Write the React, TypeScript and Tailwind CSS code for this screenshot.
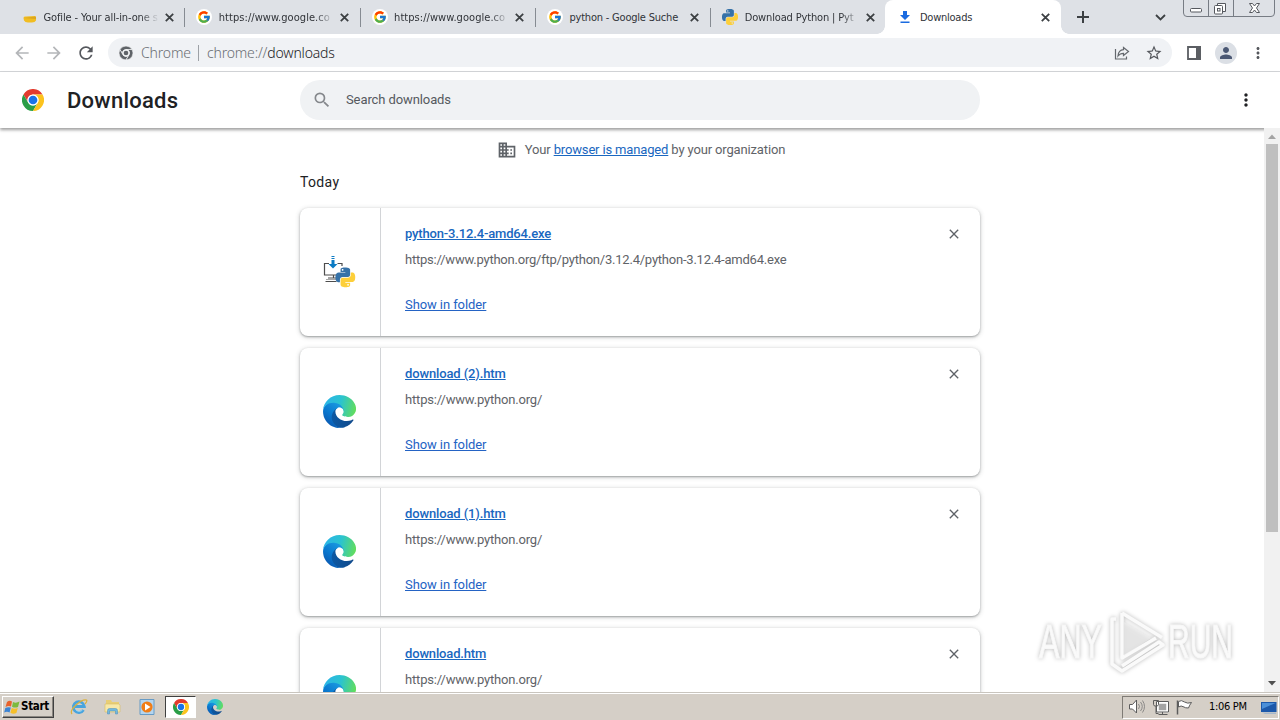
import React from "react";
import { FcGoogle } from "react-icons/fc";
import { MdDomain, MdSearch, MdClose, MdMoreVert, MdPerson, MdStarBorder, MdRefresh, MdArrowBack, MdArrowForward } from "react-icons/md";

const PY =
  "M14.25.18l.9.2.73.26.59.3.45.32.34.34.25.34.16.33.1.3.04.26.02.2-.01.13V8.5l-.05.63-.13.55-.21.46-.26.38-.3.31-.33.25-.35.19-.35.14-.33.1-.3.07-.26.04-.21.02H8.77l-.69.05-.59.14-.5.22-.41.27-.33.32-.27.35-.2.36-.15.37-.1.35-.07.32-.04.27-.02.21v3.06H3.17l-.21-.03-.28-.07-.32-.12-.35-.18-.36-.26-.36-.36-.35-.46-.32-.59-.28-.73-.21-.88-.14-1.05-.05-1.23.06-1.22.16-1.04.24-.87.32-.71.36-.57.4-.44.42-.33.42-.24.4-.16.36-.1.32-.05.24-.01h.16l.06.01h8.16v-.83H6.18l-.01-2.75-.02-.37.05-.34.11-.31.17-.28.25-.26.31-.23.38-.2.44-.18.51-.15.58-.12.64-.1.71-.06.77-.04.84-.02 1.27.05zm-6.3 1.98l-.23.33-.08.41.08.41.23.34.33.22.41.09.41-.09.33-.22.23-.34.08-.41-.08-.41-.23-.33-.33-.22-.41-.09-.41.09z";

function PythonShapes() {
  return (
    <g>
      <path d={PY} fill="#3672a8" fillRule="evenodd" />
      <path d={PY} fill="#fdcf3a" fillRule="evenodd" transform="rotate(180 12 12)" />
    </g>
  );
}

function ChromeLogo({ size, mono = false }: { size: number; mono?: boolean }) {
  const c = mono ? ["#5f6368", "#5f6368", "#5f6368", "#5f6368"] : ["#e33b2e", "#2a9e47", "#fcc31e", "#1a73e8"];
  const stroke = mono ? "#f1f3f4" : "none";
  return (
    <svg width={size} height={size} viewBox="0 0 48 48">
      <g stroke={stroke} strokeWidth={mono ? 2.5 : 0}>
        <path d="M24 12H44.8A24 24 0 0 0 3.2 12L13.6 30A12 12 0 0 1 24 12z" fill={c[0]} />
        <path d="M3.2 12A24 24 0 0 0 24 48L34.4 30A12 12 0 0 1 13.6 30z" fill={c[1]} />
        <path d="M44.8 12A24 24 0 0 1 24 48L34.4 30A12 12 0 0 0 24 12z" fill={c[2]} />
      </g>
      <circle cx="24" cy="24" r="12" fill={mono ? "#f1f3f4" : "#fff"} />
      <circle cx="24" cy="24" r={mono ? 8 : 9.5} fill={c[3]} />
    </svg>
  );
}

function EdgeLogo({ size }: { size: number }) {
  return (
    <svg width={size} height={size} viewBox="0 0 256 256" className="shrink-0">
      <defs>
        <linearGradient id="edgeDark" x1="60" y1="177" x2="240" y2="177" gradientUnits="userSpaceOnUse">
          <stop stopColor="#0c59a4" />
          <stop offset="1" stopColor="#114a8b" />
        </linearGradient>
        <linearGradient id="edgeBlue" x1="150" y1="70" x2="40" y2="225" gradientUnits="userSpaceOnUse">
          <stop stopColor="#1b9de2" />
          <stop offset=".6" stopColor="#0a78cf" />
          <stop offset="1" stopColor="#0a5cb4" />
        </linearGradient>
        <linearGradient id="edgeGreen" x1="10" y1="60" x2="250" y2="120" gradientUnits="userSpaceOnUse">
          <stop stopColor="#2bb5e8" />
          <stop offset=".5" stopColor="#2bc3cf" />
          <stop offset="1" stopColor="#62dd5d" />
        </linearGradient>
      </defs>
      <path fill="url(#edgeDark)" d="M231 190.5c-3.4 1.8-6.9 3.4-10.5 4.7a101.8 101.8 0 0 1-35.9 6.4c-47.3 0-88.5-32.5-88.5-74.3.1-11.4 6.4-21.9 16.4-27.3-42.8 1.8-53.8 46.4-53.8 72.5 0 74 68.1 81.4 82.8 81.4 7.9 0 19.8-2.3 27-4.6l1.3-.4c27.6-9.5 51-28.1 66.6-52.8a4 4 0 0 0-5.4-5.6z" />
      <path fill="url(#edgeBlue)" d="M105.7 241.4c-8.9-5.5-16.6-12.8-22.7-21.3a80.7 80.7 0 0 1 29.5-120.1c3.1-1.5 8.5-4.1 15.6-4 10.2.1 19.7 4.9 25.8 13 4.1 5.4 6.3 11.9 6.4 18.7 0-.2 24.5-79.6-80-79.6C36.4 48 .3 89.8.3 126.5c-.2 19.4 4 38.6 12.1 56.2 27.6 58.8 94.8 87.6 156.4 67.1-21.1 6.6-44.1 3.6-62.9-8.3z" />
      <path fill="url(#edgeGreen)" d="M152.3 148.9c-.9 1-3.4 2.5-3.4 5.6 0 2.6 1.7 5.2 4.8 7.3 14.4 10.1 41.7 8.7 41.8 8.7 10.7 0 21.3-2.9 30.5-8.4 18.9-11 30.5-31.2 30.5-53.1.3-22.5-8-37.4-11.3-44C223.8 23.5 177.7 0 127.6 0 57.1 0 .6 56.2-.4 126.2c.5-36.5 36.8-66 80-66 3.5 0 23.5.3 42 10.1 16.3 8.6 24.9 18.9 30.8 29.2 6.2 10.7 7.3 24.1 7.3 29.5s-2.7 13.3-7.8 19.9z" />
    </svg>
  );
}

function PythonInstaller() {
  return (
    <svg width="33" height="32" viewBox="0 0 33 32">
      <path d="M6 7.500H1.500v11.500H14M14.500 7.500h4.500V10M10.500 19v2.500M2.500 25.500h11M5 22h9" fill="none" stroke="#4d4d4d" strokeWidth="1.200" />
      <path d="M3 23.500h10" stroke="#a8a8a8" />
      <path d="M8.500 0h3v1h-3zM8.500 2h3v1h-3zM8.500 4h3v4h3L10 12.500 5.500 8h3z" fill="#0c7bc4" />
      <g transform="translate(12.500 11.500) scale(.82)">
        <PythonShapes />
      </g>
    </svg>
  );
}

const Cross = ({ c = "#3c4043" }: { c?: string }) => (
  <svg width="9" height="9" viewBox="0 0 9 9" className="shrink-0">
    <path d="M.8.8l7.4 7.400M8.200.8L.8 8.200" stroke={c} strokeWidth="1.800" />
  </svg>
);

const WhiteG = () => (
  <span className="flex h-4 w-4 items-center justify-center rounded-full bg-white">
    <FcGoogle size={14} />
  </span>
);

type TabInfo = { title: string; icon: React.ReactNode; active?: boolean; fade?: boolean; sep?: boolean; track: string };

const tabs: TabInfo[] = [
  {
    title: "Gofile - Your all-in-one s",
    track: "tracking-[-0.12px]",
    fade: true,
    sep: true,
    icon: (
      <svg width="16" height="16" viewBox="0 0 16 16">
        <path d="M2.500 9Q2.500 7.500 5 7.600L14 7q2 2.500 1 4.500-1 2-4 2H7q-3 0-4-2z" fill="#f1bd22" />
        <path d="M2.500 9L15 7.500V10z" fill="#dca61f" />
      </svg>
    ),
  },
  { title: "https://www.google.co", icon: <WhiteG />, fade: true, sep: true, track: "tracking-[0.05px]" },
  { title: "https://www.google.co", icon: <WhiteG />, fade: true, sep: true, track: "tracking-[0.05px]" },
  { title: "python - Google Suche", icon: <WhiteG />, sep: true, track: "tracking-[-0.2px]" },
  {
    title: "Download Python | Pyt",
    fade: true,
    track: "tracking-[-0.15px]",
    icon: (
      <svg width="16" height="16" viewBox="0 0 24 24">
        <PythonShapes />
      </svg>
    ),
  },
  {
    title: "Downloads",
    active: true,
    track: "tracking-[-0.25px]",
    icon: (
      <svg width="16" height="16" viewBox="0 0 16 16">
        <path d="M6 2h4v4h3L8 11 3 6h3zM3.500 12.500h9V14h-9z" fill="#1a6be0" />
      </svg>
    ),
  },
];

function Tab({ t }: { t: TabInfo }) {
  return (
    <div className={`relative flex h-[34px] w-[175.300px] shrink-0 items-center pl-3 ${t.active ? "rounded-t-lg bg-white" : ""}`}>
      {t.active && (
        <>
          <span className="absolute bottom-0 -left-2 h-2 w-2 bg-[radial-gradient(circle_at_0_0,#dee1e6_7.500px,#fff_8px)]" />
          <span className="absolute -right-2 bottom-0 h-2 w-2 bg-[radial-gradient(circle_at_100%_0,#dee1e6_7.500px,#fff_8px)]" />
        </>
      )}
      {t.icon}
      <span
        className={`mt-px ml-[6.500px] w-[115px] text-[11px] leading-4 whitespace-nowrap text-[#303338] ${t.track} ${
          t.fade ? "[mask-image:linear-gradient(to_right,#000_84%,transparent_100%)]" : ""
        }`}
      >
        {t.title}
      </span>
      <span className="ml-[6px] flex">
        <Cross />
      </span>
      {t.sep && <span className="absolute top-2 -right-px h-[19px] w-px bg-[#868b92]" />}
    </div>
  );
}

function WindowButtons() {
  return (
    <svg width="94" height="18" viewBox="0 0 94 18" className="absolute top-0 right-[4px]" fill="none">
      <path d="M1.500 0v13q0 3.500 3.500 3.500h84q3.500 0 3.500-3.500V0M26.500 0v16.500M51.500 0v16.500" stroke="#777c84" />
      <rect x="8.500" y="8.500" width="11" height="3.500" rx="1" fill="#fff" stroke="#55585e" />
      <path d="M35.500 5.500v-2h8v8h-3" fill="#fff" stroke="#55585e" />
      <rect x="32.500" y="5.500" width="8" height="8.500" rx="1" fill="#fff" stroke="#55585e" />
      <rect x="35.500" y="8.500" width="2.500" height="2.500" stroke="#55585e" />
      <path d="M67.500 3.500h3l2 2.500 2-2.500h3L74.500 8l3 4.500h-3l-2-2.500-2 2.500h-3l3-4.500z" fill="#fff" stroke="#55585e" />
    </svg>
  );
}

function Toolbar() {
  return (
    <div className="flex h-[38px] shrink-0 items-center border-b border-[#d5d7da] bg-white">
      <MdArrowBack size={20} className="ml-3 text-[#b4b6b9]" />
      <MdArrowForward size={20} className="ml-3 text-[#b4b6b9]" />
      <MdRefresh size={20} className="ml-3 text-[#55585d]" />
      <div className="ml-3 flex h-[29px] w-[1064px] items-center rounded-full bg-[#f0f2f5] pl-[11px] text-[14px] text-[#6a6e73]">
        <ChromeLogo size={14} mono />
        <span className="ml-2 w-[50px] tracking-[-0.15px] whitespace-nowrap">Chrome</span>
        <span className="ml-[7px] h-4 w-px bg-[#9da1a6]" />
        <span className="ml-2 whitespace-nowrap tracking-[-0.18px]">
          chrome://<span className="text-[#202124]">downloads</span>
        </span>
        <svg width="16" height="16" viewBox="0 0 16 16" className="ml-auto" fill="none" stroke="#64686d" strokeWidth="1.200">
          <path d="M1.500 4v10h11v-2.500" />
          <path d="M9.500 2.500L14.500 6.500 9.500 10.500V8.300Q6 8.300 4 11 4.500 5 9.500 4.700z" />
        </svg>
        <MdStarBorder size={18} className="mr-[9px] ml-[15px] text-[#55585d]" />
      </div>
      <svg width="14" height="14" viewBox="0 0 14 14" className="ml-[15px]">
        <path d="M1 1h12v12H1z" fill="none" stroke="#5b5e63" strokeWidth="1.800" />
        <path d="M9 0h5v14H9z" fill="#5b5e63" />
      </svg>
      <span className="ml-[14px] flex h-[22px] w-[22px] items-center justify-center rounded-full bg-[#dbdfe5] text-[#4b5874]">
        <MdPerson size={18} />
      </span>
      <MdMoreVert size={18} className="ml-3 text-[#55585d]" />
    </div>
  );
}

function PageHeader() {
  return (
    <header className="z-10 flex h-14 shrink-0 items-center bg-white shadow-[0_2px_3px_rgba(0,0,0,0.38)]">
      <span className="ml-[22px] flex">
        <ChromeLogo size={22} />
      </span>
      <h1 className="mt-px ml-[23px] w-[233px] text-[22px] leading-7 font-medium tracking-[0.25px] text-[#202124]">Downloads</h1>
      <div className="flex h-10 w-[680px] items-center rounded-full bg-[#f0f2f4] pl-3 text-[#55595e]">
        <MdSearch size={20} className="text-[#85888c]" />
        <span className="ml-[14px] text-[13px] tracking-[-0.1px]">Search downloads</span>
      </div>
      <MdMoreVert size={20} className="ml-[256px] text-[#202124]" />
    </header>
  );
}

type Item = { name: string; url: string; python?: boolean; track: string; urlTrack: string };

const items: Item[] = [
  { name: "python-3.12.4-amd64.exe", url: "https://www.python.org/ftp/python/3.12.4/python-3.12.4-amd64.exe", python: true, track: "tracking-[-0.16px]", urlTrack: "tracking-[-0.22px]" },
  { name: "download (2).htm", url: "https://www.python.org/", track: "tracking-[-0.13px]", urlTrack: "tracking-[-0.18px]" },
  { name: "download (1).htm", url: "https://www.python.org/", track: "tracking-[-0.13px]", urlTrack: "tracking-[-0.18px]" },
  { name: "download.htm", url: "https://www.python.org/", track: "tracking-[-0.16px]", urlTrack: "tracking-[-0.18px]" },
];

function DownloadCard({ d }: { d: Item }) {
  return (
    <article className="flex h-32 w-[680px] shrink-0 rounded-lg bg-white shadow-[0_1px_2px_rgba(60,64,67,0.4),0_1px_4px_1px_rgba(60,64,67,0.18)]">
      <div className="flex w-[81px] items-center justify-center border-r border-[#d2d4d7] pr-px pb-px">
        {d.python ? <PythonInstaller /> : <EdgeLogo size={33} />}
      </div>
      <div className="flex grow flex-col pt-4 pl-6 text-[13px] leading-5">
        <a className={`self-start font-medium text-[#1967c0] underline ${d.track}`}>{d.name}</a>
        <span className={`mt-1.5 text-[#5f6368] ${d.urlTrack}`}>{d.url}</span>
        <a className="mt-[25px] self-start tracking-[-0.09px] text-[#2463c4] underline">Show in folder</a>
      </div>
      <MdClose size={16} className="mt-[18px] mr-[18px] text-[#5f6368]" />
    </article>
  );
}

function Watermark() {
  return (
    <svg width="210" height="76" viewBox="0 0 210 76" className="absolute top-[602px] left-[1032px] [filter:drop-shadow(0_0_2px_rgba(0,0,0,0.28))]">
      <g fill="#fafafa" fontFamily="Liberation Sans" fontSize="49" stroke="#f7f7f7">
        <text x="7" y="56" textLength="63" lengthAdjust="spacingAndGlyphs">ANY</text>
        <text x="136" y="56" textLength="65" lengthAdjust="spacingAndGlyphs">RUN</text>
      </g>
      <g fill="none" stroke="#fafafa" strokeWidth="3.500" strokeLinejoin="round">
        <path d="M90 11v45l34-20" />
        <path d="M90 11l40 24.500" />
        <path d="M84 17h-4v45l10 7 41-26-4-3-37 24" />
      </g>
      <path d="M92 20v34l27-18z" fill="#efefef" fillOpacity=".6" />
    </svg>
  );
}

function Taskbar() {
  return (
    <footer className="z-10 flex h-7 shrink-0 items-center border-t border-[#c9c5be] bg-[#d5cfc7] shadow-[inset_0_1px_0_#fff]">
      <button className="mt-px ml-[2px] flex h-[22px] w-[52px] items-center border border-t-white border-r-[#404040] border-b-[#404040] border-l-white pl-px shadow-[inset_-1px_-1px_0_#8a8680]">
        <svg width="17" height="16" viewBox="0 0 17 16" className="shrink-0">
          <path d="M3 3Q5.500 1 8 2.500L7 7.500Q4.500 6.300 1.500 8z" fill="#e8622c" />
          <path d="M9 3q3 1.500 6.500-.5L14 8q-3 1.300-6-.3z" fill="#7cba3d" />
          <path d="M1.300 9Q4 7.500 6.800 8.600L5.600 13.500Q3 12 .2 13.500z" fill="#3c84d4" />
          <path d="M7.800 9q3 1.300 6 0l-1.400 5q-3 1.500-6-.2z" fill="#f6bf29" />
        </svg>
        <span className="font-['DejaVu_Sans_Condensed','DejaVu_Sans',sans-serif] text-[11.500px] font-bold tracking-[-0.3px] text-black">Start</span>
      </button>
      <svg width="18" height="18" viewBox="0 0 18 18" className="ml-[16px]" fill="none">
        <path d="M13.500 12a5.500 5.500 0 1 1 .8-3.500H5" stroke="#48a4de" strokeWidth="2.800" />
        <path d="M2 16Q-.5 13 6 7T16.500 2q1.200 1.200-1.500 4" stroke="#dcb13a" strokeWidth="1.200" />
        <path d="M12.500 12a4.500 4.500 0 0 1-7-.5" stroke="#a8dcf4" strokeWidth=".8" />
      </svg>
      <svg width="18" height="18" viewBox="0 0 18 18" className="ml-[16px]">
        <path d="M2 4V2h5l1 2h7v9H2z" fill="#e8ce76" />
        <path d="M1 6h14l1 1v7H1z" fill="#f7e8a8" stroke="#d8bd62" strokeWidth=".6" />
        <path d="M3.500 16v-3.500q0-2 2-2h6q2 0 2 2V16h-2v-3h-6v3z" fill="#72b9df" stroke="#498cba" strokeWidth=".5" />
      </svg>
      <svg width="16" height="16" viewBox="0 0 16 16" className="ml-[17px]">
        <path d="M1 .5h14v15H1z" fill="#b4d5ef" stroke="#679bc5" />
        <circle cx="8" cy="8" r="5.600" fill="#f07d16" />
        <path d="M6 4.500v7L11.500 8z" fill="#fff" />
      </svg>
      <span className="ml-[10px] flex h-[22px] w-[31px] items-center justify-center border border-t-[#404040] border-r-white border-b-white border-l-[#404040] bg-white">
        <ChromeLogo size={16} />
      </span>
      <span className="ml-[11px] flex">
        <EdgeLogo size={16} />
      </span>
      <div className="mt-px mr-px ml-auto flex h-[23px] w-[157px] items-center border border-t-[#7f7b75] border-r-white border-b-white border-l-[#7f7b75]">
        <svg width="66" height="18" viewBox="0 0 66 18" className="ml-[5px]" fill="none" stroke="#5c5c5c">
          <path d="M1.500 6.500h3L8.500 2v13l-4-4h-3z" fill="#fff" />
          <path d="M10.500 6q2 2.500 0 5M12.500 4q3.500 4.500 0 9M14.500 2.500q4 6 0 12" stroke="#777" strokeWidth=".8" />
          <path d="M29.500 4.500h10v9h-10z" fill="#a4a4a4" stroke="#fff" strokeWidth="2.500" />
          <path d="M28.500 3.500h12v10.500h-12zM30.500 16.500h9M34.500 14v2M25.500 2.500h5v4l-1 1.500h-3l-1-1.500zM28 8v7.500h2.500" />
          <path d="M49.500 16.500V2.500" strokeWidth="1.500" />
          <path d="M50.500 3.500q3-2 6 .5 3 2 7 .5-2 2.500-3 5.500-3.500 0-4.500-1-3-2-5.500 0z" fill="#fff" />
        </svg>
        <span className="ml-[15px] w-[40px] font-['DejaVu_Sans_Condensed','DejaVu_Sans',sans-serif] text-[11px] tracking-[-0.3px] whitespace-nowrap text-black">1:06 PM</span>
        <svg width="16" height="14" viewBox="0 0 16 14" className="mt-px ml-auto mr-px">
          <path d="M0 1h15.500v10H0z" fill="#1c58aa" />
          <path d="M1 2h13.500L1 8z" fill="#4b8fd8" />
          <path d="M1 11.500h14v1.500H4z" fill="#a5b8cc" />
        </svg>
      </div>
    </footer>
  );
}

export default function App() {
  return (
    <div className="relative flex h-[720px] w-[1280px] flex-col overflow-hidden bg-white font-[Roboto,sans-serif]">
      <div className="relative flex h-[34px] shrink-0 bg-[#dee1e6] pl-[9px] font-['DejaVu_Sans_Condensed','DejaVu_Sans',sans-serif]">
        {tabs.map((t, i) => (
          <Tab key={i} t={t} />
        ))}
        <svg width="12" height="12" viewBox="0 0 12 12" className="mt-[11px] ml-[16px]">
          <path d="M6 0v12M0 6h12" stroke="#3c4043" strokeWidth="2" />
        </svg>
        <svg width="11" height="7" viewBox="0 0 11 7" className="mt-[14px] ml-[66px]">
          <path d="M1 1l4.500 4.500L10 1" fill="none" stroke="#3c4043" strokeWidth="1.800" />
        </svg>
        <WindowButtons />
      </div>
      <div className="font-['Noto_Sans',sans-serif] font-light">
        <Toolbar />
      </div>
      <PageHeader />
      <div className="flex min-h-0 grow">
        <main className="flex grow flex-col items-center overflow-hidden pl-4">
          <div className="flex h-[43px] shrink-0 items-center gap-[8px] pl-[2px] text-[13px] text-[#5f6368]">
            <MdDomain size={20} />
            <span className="tracking-[-0.15px] whitespace-nowrap">
              Your <a className="text-[#1967c0] underline">browser is managed</a> by your organization
            </span>
          </div>
          <section className="flex w-[680px] flex-col gap-3">
            <h2 className="h-[25px] text-[14px] leading-[23px] tracking-[0.35px] text-[#202124]">Today</h2>
            {items.map((d) => (
              <DownloadCard key={d.name} d={d} />
            ))}
          </section>
        </main>
        <aside className="z-20 flex w-4 shrink-0 flex-col items-center bg-[#f1f1f1]">
          <svg width="16" height="16" viewBox="0 0 16 16" className="shrink-0">
            <path d="M4 11h8L8 6.500z" fill="#a3a3a3" />
          </svg>
          <div className="h-[388px] w-3 bg-[#bfbfbf]" />
          <svg width="16" height="16" viewBox="0 0 16 16" className="mt-auto shrink-0">
            <path d="M4 5h8L8 9.500z" fill="#505050" />
          </svg>
        </aside>
      </div>
      <Watermark />
      <Taskbar />
    </div>
  );
}
